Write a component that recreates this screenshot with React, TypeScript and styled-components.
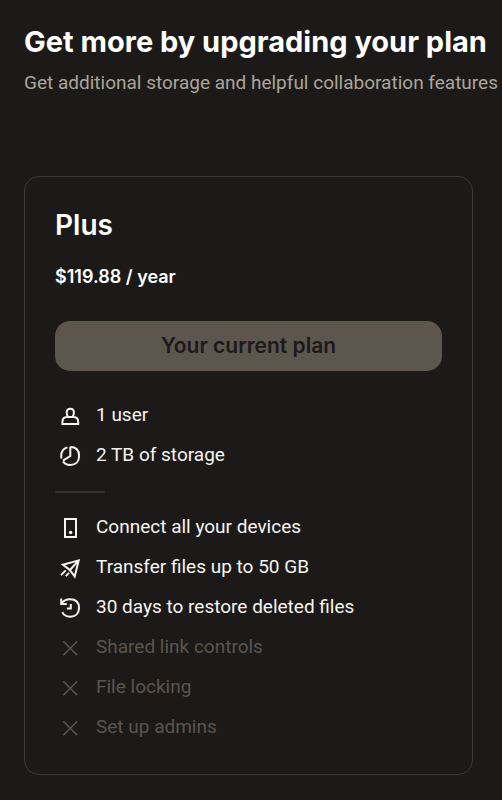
import React from "react";
import styled, { createGlobalStyle } from "styled-components";

const GlobalStyle = createGlobalStyle`
  *, *::before, *::after { box-sizing: border-box; }
  body {
    margin: 0;
    background: #1b1a18;
    color: #fff;
    font-family: Roboto, "Liberation Sans", sans-serif;
  }
`;

const Page = styled.main`
  padding: 24px 29px 24px 24px;
`;

const Heading = styled.h1`
  margin: 0;
  font: 700 29px/36px Inter, "Liberation Sans", sans-serif;
  white-space: nowrap;
`;

const Subtitle = styled.p`
  margin: 9px 0 0;
  font-size: 19px;
  line-height: 28px;
  color: #aca59b;
  white-space: nowrap;
`;

const PlanCard = styled.section`
  margin-top: 79px;
  padding: 30px 30px 27px;
  border: 1px solid #3b3a38;
  border-radius: 15px;
`;

const PlanName = styled.h2`
  margin: 0;
  font: 600 28px/36px Inter, "Liberation Sans", sans-serif;
`;

const Price = styled.p`
  margin: 22px 0 0;
  font: 600 18px/24px Inter, "Liberation Sans", sans-serif;
`;

const PlanButton = styled.button`
  display: block;
  width: 100%;
  height: 50px;
  margin: 32px 0 24px;
  padding: 0;
  border: 0;
  border-radius: 15px;
  background: #5c564f;
  color: #1e1919;
  font: 600 21px/24px Inter, "Liberation Sans", sans-serif;
`;

const FeatureList = styled.ul`
  margin: 0;
  padding: 0;
  list-style: none;
`;

const FeatureRow = styled.li<{ $unavailable?: boolean }>`
  display: flex;
  align-items: center;
  gap: 14px;
  height: 40px;
  padding-left: 3px;
  font-size: 19px;
  line-height: 24px;
  color: ${({ $unavailable }) => ($unavailable ? "#5a554e" : "#f7f5f2")};
`;

const Divider = styled.hr`
  width: 50px;
  height: 2px;
  margin: 16px 0 14px;
  border: 0;
  background: #32312f;
`;

const Glyph = styled.svg`
  flex: none;
  width: 24px;
  height: 24px;
  margin-top: 2px;
  fill: none;
  stroke: currentColor;
  stroke-width: 2;
`;

type IconName = "user" | "storage" | "device" | "send" | "restore" | "cross";

const drawings: Record<IconName, React.ReactNode> = {
  user: (
    <path d="M9.9 12.3C9 11.3 8.7 10 8.7 8.4C8.7 6.2 10.1 4.7 12.3 4.7s3.6 1.5 3.6 3.7c0 1.6-.3 2.9-1.2 3.9M9 13h6.6c3 0 4.6 2 4.6 5v2H4.4v-2C4.4 15 6 13 9 13Z" />
  ),
  storage: (
    <path d="M12.3 2.8V12L5 16.6M12.3 3.1c5.8 0 8.8 3.5 8.8 8.9s-3.5 9-8.9 9c-3.1 0-5.6-1.3-7.2-3.6M9.4 3.4C5.4 4.5 3.2 7.6 3.2 12c0 1 .1 1.8.3 2.6" />
  ),
  device: (
    <>
      <path d="M7 3h11v18H7z" />
      <circle cx="12.6" cy="16.5" r="1.7" fill="currentColor" stroke="none" />
    </>
  ),
  send: (
    <path d="M20.7 4.4 4.9 8.7l5.2 3.9 3.2 3.2 3.4 4.7ZM20.7 4.4 11.7 14.2M7.7 14.4 3 19.1M11 16.9 7.8 20.1" />
  ),
  restore: (
    <path d="M3.2 2.4v5.5h5.6M3.6 7.4C5.4 4.6 8.5 3.2 12 3.2c5.6 0 9 3.2 9 8.7 0 5.4-3.4 8.8-8.7 8.8-3.8 0-6.6-1.5-8-4.5M12.8 8v4.5H8.9" />
  ),
  cross: <path d="m5.3 5.3 14 14M19.3 5.3l-14 14" strokeWidth="1.6" />,
};

const Icon = ({ name }: { name: IconName }) => (
  <Glyph viewBox="0 0 24 24" aria-hidden="true">
    {drawings[name]}
  </Glyph>
);

interface Feature {
  icon: IconName;
  label: string;
}

const allowances: Feature[] = [
  { icon: "user", label: "1 user" },
  { icon: "storage", label: "2 TB of storage" },
];

const features: Feature[] = [
  { icon: "device", label: "Connect all your devices" },
  { icon: "send", label: "Transfer files up to 50 GB" },
  { icon: "restore", label: "30 days to restore deleted files" },
  { icon: "cross", label: "Shared link controls" },
  { icon: "cross", label: "File locking" },
  { icon: "cross", label: "Set up admins" },
];

const Features = ({ items }: { items: Feature[] }) => (
  <FeatureList>
    {items.map(({ icon, label }) => (
      <FeatureRow key={label} $unavailable={icon === "cross"}>
        <Icon name={icon} />
        <span>{label}</span>
      </FeatureRow>
    ))}
  </FeatureList>
);

export default function App() {
  return (
    <>
      <GlobalStyle />
      <Page>
        <Heading>Get more by upgrading your plan</Heading>
        <Subtitle>Get additional storage and helpful collaboration features</Subtitle>
        <PlanCard aria-labelledby="plan-name">
          <PlanName id="plan-name">Plus</PlanName>
          <Price>$119.88 / year</Price>
          <PlanButton type="button" disabled>
            Your current plan
          </PlanButton>
          <Features items={allowances} />
          <Divider />
          <Features items={features} />
        </PlanCard>
      </Page>
    </>
  );
}
